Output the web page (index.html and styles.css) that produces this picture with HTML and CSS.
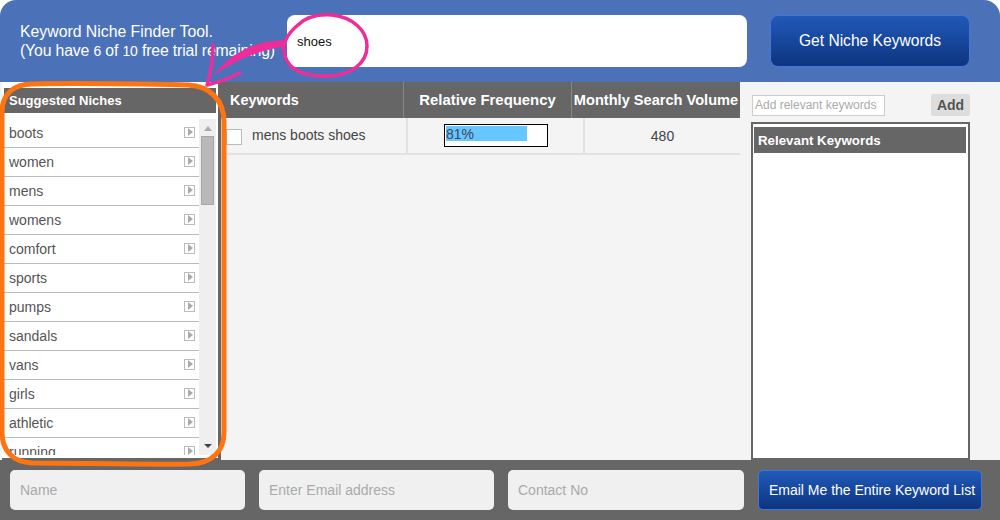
FILE: index.html
```html
<!DOCTYPE html>
<html lang="en">
<head>
<meta charset="utf-8">
<title>Keyword Niche Finder Tool</title>
<link rel="stylesheet" href="styles.css">
</head>
<body>
<div class="app">
  <header class="top">
    <div class="intro">Keyword Niche Finder Tool.<br><span class="intro-sub">(You have <span class="num">6</span> of <span class="num">10</span> free trial remaining)</span></div>
    <div class="search">shoes</div>
    <button class="btn btn-get">Get Niche Keywords</button>
  </header>
  <main class="main">
    <section class="niches">
      <h2 class="niches-head">Suggested Niches</h2>
      <div class="niches-body">
        <ul class="list">
          <li class="item">boots<i class="arrow"></i></li>
          <li class="item">women<i class="arrow"></i></li>
          <li class="item">mens<i class="arrow"></i></li>
          <li class="item">womens<i class="arrow"></i></li>
          <li class="item">comfort<i class="arrow"></i></li>
          <li class="item">sports<i class="arrow"></i></li>
          <li class="item">pumps<i class="arrow"></i></li>
          <li class="item">sandals<i class="arrow"></i></li>
          <li class="item">vans<i class="arrow"></i></li>
          <li class="item">girls<i class="arrow"></i></li>
          <li class="item">athletic<i class="arrow"></i></li>
          <li class="item">running<i class="arrow"></i></li>
        </ul>
        <div class="scrollbar">
          <i class="sb-up"></i>
          <i class="sb-thumb"></i>
          <i class="sb-down"></i>
        </div>
      </div>
    </section>
    <section class="results">
      <div class="thead">
        <div class="th th-key">Keywords</div>
        <div class="th th-freq">Relative Frequency</div>
        <div class="th th-vol">Monthly Search Volume</div>
      </div>
      <div class="tr">
        <div class="td td-key"><i class="check"></i>mens boots shoes</div>
        <div class="td td-freq"><div class="bar"><div class="bar-fill">81%</div></div></div>
        <div class="td td-vol">480</div>
      </div>
    </section>
    <aside class="relevant">
      <div class="add-row">
        <div class="add-input">Add relevant keywords</div>
        <div class="add-btn">Add</div>
      </div>
      <div class="rel-box">
        <div class="rel-head">Relevant Keywords</div>
      </div>
    </aside>
  </main>
  <footer class="bottom">
    <div class="field field-name">Name</div>
    <div class="field field-mail">Enter Email address</div>
    <div class="field field-phone">Contact No</div>
    <button class="btn btn-email">Email Me the Entire Keyword List</button>
  </footer>
  <svg class="marks" width="1000" height="520" viewBox="0 0 1000 520" aria-hidden="true">
    <path class="ink-orange" d="M32 84 C80 83 140 84 188 85 C210 86 224 100 224 122 L224 432 C224 452 212 463 190 464 C140 465 80 463 32 463 C12 462 2 450 2 432 L2 112 C2 94 14 84 32 84 Z"/>
    <path class="ink-pink" d="M298 25 C306 17 318 14 332 15 C352 17 367 30 367 46 C367 64 350 75 330 76 C308 77 290 72 285 56 C281 44 288 33 299 24"/>
    <path class="ink-arrow" d="M285 41 C262 40 234 50 215 74 C236 59 262 49 285 46 Z"/>
    <path class="ink-arrow-head" d="M213 45 C213 60 211 72 207 85 C220 82 232 77 240 73"/>
  </svg>
</div>
</body>
</html>
```

FILE: styles.css
```css
* { box-sizing: border-box; }
html, body { margin: 0; padding: 0; background: #fff; }
body { font-family: "Liberation Sans", Arial, sans-serif; color: #444; }
.app { position: relative; width: 1000px; height: 520px; overflow: hidden; display: flex; flex-direction: column; }

.top { height: 82px; flex: none; display: flex; align-items: flex-start; background: #4b72b8; border-radius: 16px 16px 0 0; padding: 15px 30px 0 20px; }
.intro { width: 267px; margin-top: 7px; font-size: 15.8px; line-height: 19px; color: #fff; white-space: nowrap; }
.intro-sub { letter-spacing: -0.15px; }
.num { font-size: 14px; }
.search { width: 460px; height: 52px; background: #fff; border-radius: 8px; padding: 0 10px; font-size: 13px; line-height: 54px; color: #111; }
.btn { border: 1px solid #3f78d8; color: #fff; font-family: inherit; background: linear-gradient(#2159b8, #0d3580); padding: 0; }
.btn-get { width: 200px; height: 52px; margin-left: 23px; border-radius: 8px; font-size: 15.6px; }

.main { height: 378px; flex: none; display: flex; background: #f4f4f4; }
.niches { width: 219px; flex: none; margin-left: 2px; padding: 6px 2px 0 2px; background: #fff; border-right: 3px solid #666; border-bottom: 2px solid #666; }
.niches-head { margin: 0; height: 25px; background: #666; color: #fff; font-size: 13px; font-weight: bold; line-height: 25px; padding-left: 5px; white-space: nowrap; }
.niches-body { display: flex; height: 336px; margin-top: 6px; overflow: hidden; }
.list { list-style: none; margin: 0; padding: 0; width: 195px; flex: none; }
.item { height: 29px; border-bottom: 1px solid #bbb; display: flex; align-items: center; justify-content: space-between; padding: 0 4px 0 5px; font-size: 14px; color: #555; }
.arrow { width: 11px; height: 11px; border: 1px solid #bbb; position: relative; display: block; background: #fff; margin-top: -1px; }
.arrow::after { content: ""; position: absolute; left: 3px; top: 0; border-left: 5px solid #aaa; border-top: 4.5px solid transparent; border-bottom: 4.5px solid transparent; }
.scrollbar { width: 17px; background: #efefef; display: flex; flex-direction: column; align-items: center; height: 100%; }
.sb-up { margin-top: 7px; border-bottom: 5px solid #aaa; border-left: 4.5px solid transparent; border-right: 4.5px solid transparent; }
.sb-thumb { width: 13px; height: 69px; margin-top: 5px; background: #b9b9b9; border: 1px solid #a6a6a6; }
.sb-down { margin-top: auto; margin-bottom: 7px; border-top: 4px solid #444; border-left: 4px solid transparent; border-right: 4px solid transparent; }

.results { width: 519px; flex: none; }
.thead { display: flex; height: 36px; background: #666; color: #fff; font-weight: bold; line-height: 36px; }
.th { white-space: nowrap; }
.th-key { width: 183px; padding-left: 9px; border-right: 1px solid #888; font-size: 14.4px; }
.th-freq { width: 168px; text-align: center; border-right: 1px solid #888; font-size: 14.9px; }
.th-vol { width: 168px; text-align: center; font-size: 14.6px; }
.tr { display: flex; height: 37px; border-bottom: 2px solid #e2e2e2; }
.td { height: 35px; font-size: 14px; color: #444; }
.td-key { width: 187px; display: flex; align-items: center; padding: 0 0 1px 5px; border-right: 2px solid #e2e2e2; }
.check { width: 16px; height: 16px; border: 1px solid #bbb; background: #fff; margin: 3px 10px 0 0; }
.td-freq { width: 177px; padding: 6px 0 0 36px; border-right: 2px solid #e2e2e2; }
.bar { width: 104px; height: 23px; border: 1px solid #000; padding: 1px; background: #fff; }
.bar-fill { width: 81%; height: 15px; background: #66c6ff; line-height: 17px; font-size: 14px; color: #445; }
.td-vol { width: 155px; text-align: center; line-height: 37px; }

.relevant { flex: 1; padding: 12px 30px 0 11px; display: flex; flex-direction: column; }
.add-row { display: flex; justify-content: space-between; height: 24px; margin-left: 1px; }
.add-input { width: 133px; height: 21px; margin-top: 1px; background: #fff; border: 1px solid #ccc; font-size: 12px; line-height: 19px; padding-left: 2px; color: #aaa; white-space: nowrap; }
.add-btn { width: 39px; height: 22px; background: #ddd; border-radius: 2px; font-size: 14px; font-weight: bold; line-height: 22px; text-align: center; color: #555; }
.rel-box { height: 338px; margin-top: 4px; border: 2px solid #666; background: #fff; padding: 3px 2px 0 1px; }
.rel-head { height: 26px; background: #666; color: #fff; font-size: 13.3px; font-weight: bold; line-height: 28px; padding-left: 4px; white-space: nowrap; }

.bottom { height: 60px; flex: none; display: flex; align-items: flex-start; background: #666; padding: 10px 0 0 10px; }
.field { width: 235px; height: 40px; background: #f0f0f0; border-radius: 5px; font-size: 14px; line-height: 40px; padding-left: 10px; color: #aaa; }
.field-mail { margin-left: 14px; }
.field-phone { margin-left: 14px; width: 236px; }
.btn-email { width: 224px; height: 40px; margin-left: 14px; border-radius: 5px; font-size: 14px; padding-left: 4px; }

.marks { position: absolute; left: 0; top: 0; pointer-events: none; }
.marks path { fill: none; stroke-linecap: round; stroke-linejoin: round; }
.ink-orange { stroke: #fd7412; stroke-width: 5; }
.ink-pink { stroke: #ee2c9a; stroke-width: 3.5; }
.marks .ink-arrow { fill: #ee2c9a; stroke: #ee2c9a; stroke-width: 1; }
.ink-arrow-head { stroke: #ee2c9a; stroke-width: 3.5; }
```
